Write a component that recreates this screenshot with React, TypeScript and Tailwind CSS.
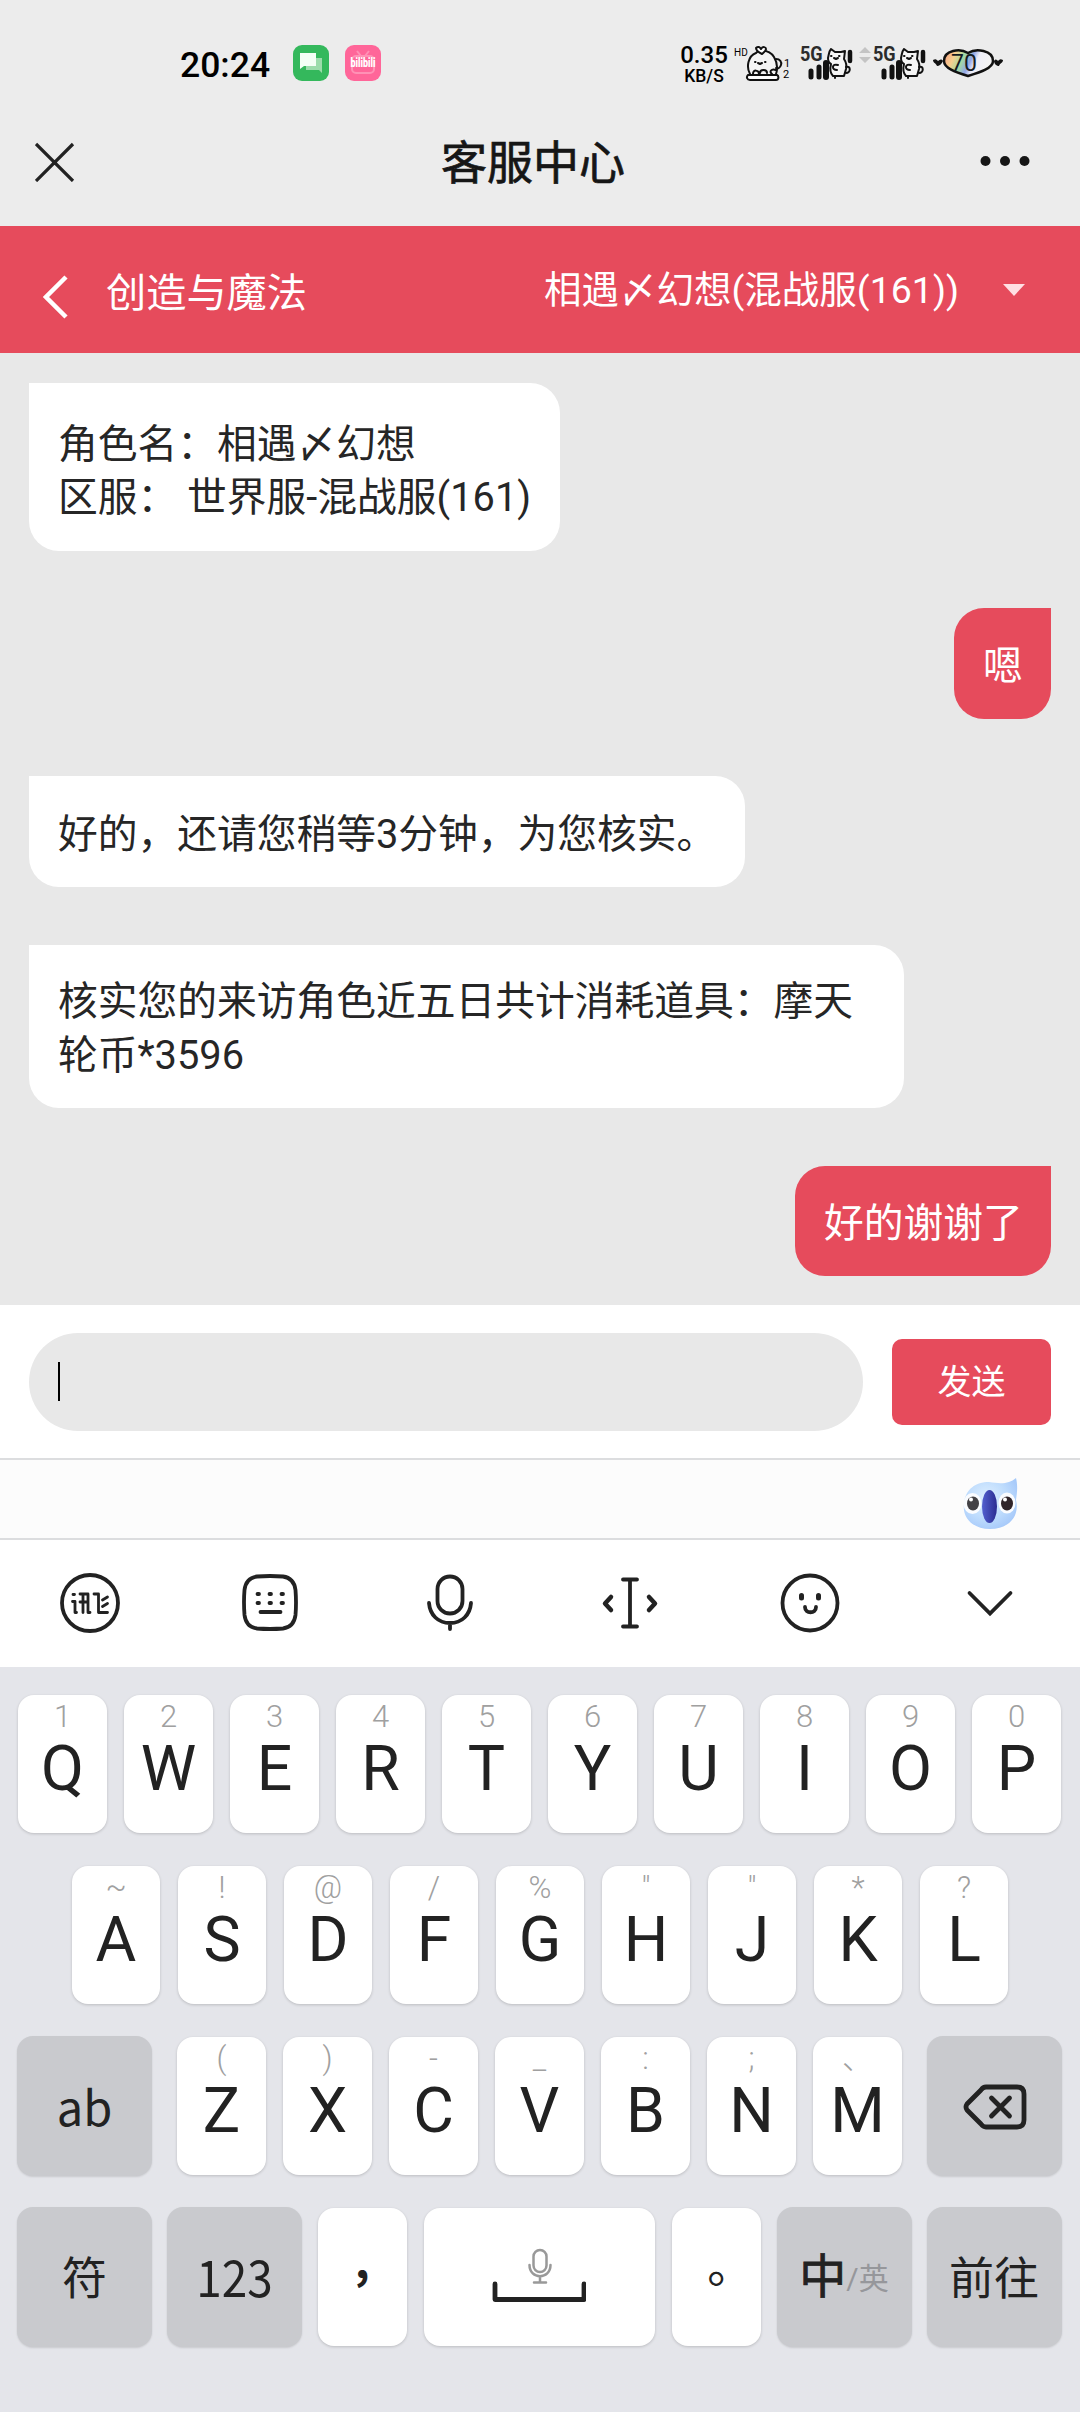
import type { ReactNode } from 'react';

interface Message {
  id: number;
  from: 'agent' | 'user';
  lines: string[];
  className: string;
}

interface LetterKey {
  label: string;
  hint: string;
}

const MESSAGES: Message[] = [
  { id: 1, from: 'agent', lines: ['角色名：相遇〆幻想', '区服：\u00a0世界服-混战服(161)'], className: 'w-[531px] h-[168px] mb-[57px] pt-[8px]' },
  { id: 2, from: 'user', lines: ['嗯'], className: 'w-[97px] h-[111px] mb-[57px] pt-[7px]' },
  { id: 3, from: 'agent', lines: ['好的，还请您稍等3分钟，为您核实。'], className: 'w-[716px] h-[111px] mb-[58px] pt-[6px]' },
  { id: 4, from: 'agent', lines: ['核实您的来访角色近五日共计消耗道具：摩天', '轮币*3596'], className: 'w-[875px] h-[163px] mb-[58px] pt-[4px]' },
  { id: 5, from: 'user', lines: ['好的谢谢了'], className: 'w-[256px] h-[110px] pt-[5px]' },
];

const toKeys = (letters: string, hints: string): LetterKey[] =>
  letters.split('').map((label, i) => ({ label, hint: hints[i] }));

const ROW_1 = toKeys('QWERTYUIOP', '1234567890');
const ROW_2 = toKeys('ASDFGHJKL', '~!@/%""*?');
const ROW_3 = toKeys('ZXCVBNM', '()-_:;、');

function CatIcon() {
  return (
    <svg className="h-[38px] w-[38px]" viewBox="0 0 38 38" fill="none" stroke="#111" strokeWidth="2" strokeLinecap="round" strokeLinejoin="round">
      <path d="M5 29C1 22 3 11 11 8c1-1 2-2 3-2 6-1 12 1 15 6 3 5 4 11 2 17" fill="#f4f4f4" />
      <path d="M11 3c2-2 4-1 5 1 2-3 5-2 5 0 0 2-3 4-4 5-2-1-6-3-6-6Z" fill="#fff" />
      <path d="M31 14c4 0 6 3 5 6s-3 4-5 3" />
      <path d="M3 30c-2 2-1 5 2 5h26c3 0 3-4 1-5Z" fill="#fff" />
      <path d="M8 29c0-5 6-4 6 0M15 28c0-4 7-4 7 0M31 25c-5-2-7 2-4 4M10 17h.5M20 17h.5M13 18l2 1 2-1" />
    </svg>
  );
}

function SignalIcon() {
  return (
    <span className="relative block h-[36px] w-[55px]">
      <span className="absolute left-0 top-0 origin-left scale-x-[.86] font-[Roboto] text-[21px] font-bold leading-[18px] text-[#2b2b2b]">5G</span>
      <svg className="h-[36px] w-[55px]" viewBox="0 0 55 36" fill="none" stroke="#111" strokeWidth="2" strokeLinecap="round" strokeLinejoin="round">
        <path d="M11 26v6M19 22v10" strokeWidth="5" />
        <path d="M26 18v14" strokeWidth="6" />
        <path d="M50 7v9" strokeWidth="4.5" />
        <path d="M28 13c1-4 1-7 3-9l4 3h6l4-1-1 8c2 3 3 6 2 10l-2 7H33c-3-3-3-8-2-12-2-1-3-3-3-6Z" fill="#f5f5f5" />
        <path d="M31 11h.5M39 11h.5M34 13l2 1 2-1M38 20c-6-2-7 5-1 5M35 33v-2M46 22c5-2 5 6 0 6" />
      </svg>
    </span>
  );
}

function BatteryIcon() {
  return (
    <span className="relative flex h-[30px] w-[72px] items-center justify-center">
      <svg className="absolute inset-0" width="72" height="30" viewBox="0 0 72 30">
        <defs>
          <linearGradient id="battery" x1="0" x2="1" y1="0" y2=".25">
            <stop offset="0" stopColor="#f59a86" />
            <stop offset=".25" stopColor="#f7cf8e" />
            <stop offset=".43" stopColor="#a5dba0" />
            <stop offset=".6" stopColor="#91a6e8" />
            <stop offset=".72" stopColor="#eeeef8" />
            <stop offset="1" stopColor="#f4f4f4" />
          </linearGradient>
        </defs>
        <path d="M36 5C28 0 12 2 12 13c0 7 11 11 24 15 13-4 25-8 25-15C61 2 44 0 36 5Z" fill="url(#battery)" stroke="#111" strokeWidth="2.5" />
        <path d="M1 12c3-2 4 0 5 1 2-2 4-2 5 0-1 3-4 5-6 5-1-3-4-3-4-6ZM71 12c-3-2-4 0-5 1-2-2-3-2-4 0 0 3 3 5 5 5 1-3 4-3 4-6Z" fill="#111" />
      </svg>
      <span className="relative pr-2 font-[Roboto] text-[23px] leading-none text-[#151b22]">70</span>
    </span>
  );
}

function StatusBar() {
  return (
    <div className="flex h-[126px] items-start pt-[45px] font-[Roboto] text-black">
      <span className="ml-[180px] mt-[2px] w-[113px] text-[35.5px] font-medium leading-[36px]">20:24</span>
      <svg className="mr-4 h-9 w-9 shrink-0" viewBox="0 0 36 36">
        <rect width="36" height="36" rx="9" fill="#34b85c" />
        <path d="M13 13h16v15l-3-3H13Z" fill="#9bdcab" />
        <path d="M7 8h16v13H11l-4 3Z" fill="#f3fff5" />
      </svg>
      <span className="relative flex h-9 w-9 shrink-0 items-center justify-center rounded-[9px] bg-[#ff6699]">
        <svg className="absolute inset-0" viewBox="0 0 36 36" fill="none" stroke="#ff91b5" strokeWidth="2">
          <rect x="7" y="11" width="22" height="17" rx="4" />
          <path d="M12 6l4 5M24 6l-4 5" />
        </svg>
        <span className="relative scale-y-150 text-[9px] font-black leading-none text-white">bilibili</span>
      </span>
      <span className="ml-[298px] flex w-[50px] shrink-0 flex-col items-center font-medium">
        <span className="text-[24px] leading-[21px]">0.35</span>
        <span className="text-[17.5px] leading-[20px]">KB/S</span>
      </span>
      <span className="ml-[5px] mt-[4px] w-[14px] shrink-0 text-[10px] leading-[8px]">HD</span>
      <span className="-ml-[3px] shrink-0">
        <CatIcon />
      </span>
      <span className="mt-[13px] flex w-[17px] shrink-0 flex-col text-[11px] leading-[11px]">
        <span className="pl-px">1</span>
        <span>2</span>
      </span>
      <SignalIcon />
      <svg className="ml-[4px] mt-[2px] h-4 w-3 shrink-0" viewBox="0 0 12 16" fill="#c4c4c4">
        <path d="M6 0l6 6H0ZM6 16l6-6H0Z" />
      </svg>
      <span className="ml-[2px]">
        <SignalIcon />
      </span>
      <span className="ml-[4px] mt-[3px]">
        <BatteryIcon />
      </span>
    </div>
  );
}

function TitleBar() {
  return (
    <div className="flex h-[100px] items-start justify-between pl-[35px] pr-[49px] pt-[12px]">
      <svg className="mt-[4px] h-10 w-[52px]" viewBox="0 0 52 40" stroke="#222" strokeWidth="3.2">
        <path d="M1 2l37 37M38 2L1 39" />
      </svg>
      <h1 className="text-[46px] leading-[50px] text-[#161616] [-webkit-text-stroke:0.7px]">客服中心</h1>
      <svg className="mt-[17px] h-3 w-[52px]" viewBox="0 0 52 12" fill="#161616">
        <circle cx="6.5" cy="6" r="5" />
        <circle cx="26" cy="6" r="5" />
        <circle cx="45.5" cy="6" r="5" />
      </svg>
    </div>
  );
}

function GameHeader() {
  return (
    <div className="flex h-[127px] items-center bg-[#e64b5c] text-white">
      <svg className="ml-[43px] mt-[14px] h-[44px] w-[26px]" viewBox="0 0 26 44" fill="none" stroke="white" strokeWidth="4.5">
        <path d="M23 2L3 22l20 20" />
      </svg>
      <span className="ml-[37px] mt-[9px] text-[40.2px] leading-[50px]">创造与魔法</span>
      <span className="ml-auto whitespace-nowrap text-[37.5px] leading-[50px]">相遇〆幻想(混战服(161))</span>
      <svg className="ml-[44px] mr-[55px] h-[12px] w-[22px]" viewBox="0 0 22 12" fill="#ffdfe3">
        <path d="M0 0h22L11 12Z" />
      </svg>
    </div>
  );
}

function Bubble({ message }: { message: Message }) {
  const isUser = message.from === 'user';

  return (
    <div
      className={`flex flex-col justify-center whitespace-nowrap px-[29px] text-[39.75px] leading-[53.5px] ${message.className} ${
        isUser ? 'self-end rounded-[30px] rounded-tr-none bg-[#e64b5c] text-white' : 'rounded-[30px] rounded-tl-none bg-white text-[#262626]'
      }`}
    >
      {message.lines.map((line) => (
        <p key={line}>{line}</p>
      ))}
    </div>
  );
}

function Composer() {
  return (
    <div className="flex h-[153px] items-center justify-between bg-white px-[29px]">
      <div className="flex h-[98px] w-[834px] items-center rounded-full bg-[#e8e8e8] pl-[29px]">
        <span className="h-[39px] w-[2px] bg-black" />
      </div>
      <button className="h-[86px] w-[159px] rounded-[10px] bg-[#e64b5c] pt-[2px] text-[34px] text-white">发送</button>
    </div>
  );
}

function MascotIcon() {
  return (
    <svg className="mt-[11px] h-[56px] w-[60px]" viewBox="0 0 60 56">
      <defs>
        <radialGradient id="face" cx=".42" cy=".4" r=".65">
          <stop offset="0" stopColor="#e0f0ff" />
          <stop offset=".6" stopColor="#bedcfd" />
          <stop offset="1" stopColor="#a6c9fa" />
        </radialGradient>
        <linearGradient id="nose" x1="0" x2="1">
          <stop offset="0" stopColor="#5360cf" />
          <stop offset="1" stopColor="#2b2c91" />
        </linearGradient>
      </defs>
      <path d="M56 1c2 8 1 15 0 22 4 17-8 29-26 29C13 52 2 41 4 27 5 12 16 5 29 5c12 2 20 2 27-4Z" fill="url(#face)" />
      <ellipse cx="12.5" cy="26.5" rx="9" ry="10.5" fill="#fafcff" />
      <ellipse cx="47" cy="26" rx="8.5" ry="10.5" fill="#fafcff" />
      <ellipse cx="13" cy="26.5" rx="6" ry="7" fill="#434246" />
      <ellipse cx="47" cy="26.5" rx="6" ry="7" fill="#30252a" />
      <circle cx="11" cy="22.5" r="2" fill="#fff" />
      <circle cx="45" cy="22.5" r="2" fill="#fff" />
      <ellipse cx="29.5" cy="29.5" rx="7.5" ry="16.5" fill="url(#nose)" />
    </svg>
  );
}

function ToolIcon({ children }: { children: ReactNode }) {
  return (
    <svg className="h-16 w-16" viewBox="0 0 64 64" fill="none" stroke="#222" strokeWidth="3.8" strokeLinecap="round" strokeLinejoin="round">
      {children}
    </svg>
  );
}

function Toolbar() {
  return (
    <div className="grid h-[127px] grid-cols-6 place-items-center bg-white pb-[2px]">
      <ToolIcon>
        <circle cx="32" cy="32" r="28" />
        <g strokeWidth="2.8">
          <path d="M15 23.5h1.5M14.5 30.5H17v11h1.5" />
          <path d="M22 23h8v18.500h2M25 23v18.5M22 31h6M36 23h4.500v18.500h9" />
          <path d="M44.5 29l5-3M44.5 35.5l5-3" />
        </g>
      </ToolIcon>
      <ToolIcon>
        <path d="M19 5.500Q32 4.500 45 5.500 56 7 57.500 19q1 13 0 25-1.500 12-12.500 13.500-13 1-26 0Q8 56 6.500 44q-1-13 0-25Q8 7 19 5.500Z" />
        <path d="M19.500 23H21M31.500 23H33M43.500 23H45M19.500 32H21M31.500 32H33M43.500 32H45M22.500 41h20" />
      </ToolIcon>
      <ToolIcon>
        <rect x="19.5" y="5.5" width="25" height="37" rx="12.5" />
        <path d="M11 32c1 12 9 20 21 20s20-8 21-20M32 52v6" />
      </ToolIcon>
      <ToolIcon>
        <path d="M25 8.500h14M25 55.500h14M32 8.500v47" />
        <path d="M13 26l-6 6.500 6 6.500M51 26l6 6.500-6 6.500" strokeWidth="4.5" />
      </ToolIcon>
      <ToolIcon>
        <circle cx="32" cy="32" r="27.5" />
        <path d="M23.500 24.500v2.500M40.500 24.500v2.500" strokeWidth="5" />
        <path d="M27 36c0 7 11 7 11 0" />
      </ToolIcon>
      <ToolIcon>
        <path d="M11.500 22L32 42.500 52.500 22" strokeLinejoin="miter" />
      </ToolIcon>
    </div>
  );
}

function LetterKeyCap({ label, hint }: LetterKey) {
  return (
    <div className="flex h-[138px] w-[88.5px] shrink-0 flex-col items-center rounded-[16px] bg-white font-[Roboto,'Noto_Sans_CJK_SC'] shadow-[0_1px_3px_rgba(0,0,0,0.18)]">
      <span className="mt-[5px] h-[33px] text-[31px] font-light leading-[34px] text-[#a0a0a0]">{hint}</span>
      <span className="text-[62.5px] leading-[72px] text-[#222]">{label}</span>
    </div>
  );
}

function FunctionKey({ children }: { children: ReactNode }) {
  return (
    <div className="flex h-[140px] w-[135px] shrink-0 items-center justify-center rounded-[16px] bg-[#c9cace] text-[#222] shadow-[0_1px_2px_rgba(0,0,0,0.12)]">
      {children}
    </div>
  );
}

function PunctuationKey({ children }: { children: ReactNode }) {
  return (
    <div className="flex h-[138px] w-[88.5px] shrink-0 items-center justify-center rounded-[16px] bg-white text-[#222] shadow-[0_1px_3px_rgba(0,0,0,0.18)]">
      {children}
    </div>
  );
}

function Keyboard() {
  return (
    <div className="h-[745px] bg-[#e4e5ea] pt-[28px]">
      <div className="flex justify-center gap-[17.5px] pr-px">
        {ROW_1.map((key) => (
          <LetterKeyCap key={key.label} {...key} />
        ))}
      </div>
      <div className="mt-[33px] flex justify-center gap-[17.5px]">
        {ROW_2.map((key) => (
          <LetterKeyCap key={key.label} {...key} />
        ))}
      </div>
      <div className="mt-[32px] flex items-center justify-between pl-[17px] pr-[18px]">
        <FunctionKey>
          <span className="pb-[2px] font-['Noto_Sans_CJK_SC'] text-[47px] leading-none">ab</span>
        </FunctionKey>
        <div className="flex gap-[17.5px]">
          {ROW_3.map((key) => (
            <LetterKeyCap key={key.label} {...key} />
          ))}
        </div>
        <FunctionKey>
          <svg className="mt-[2px] h-[46px] w-[64px]" viewBox="0 0 64 46" fill="none" stroke="#222" strokeWidth="4.8" strokeLinecap="round" strokeLinejoin="round">
            <path d="M23 3h31q7 0 7 7v26q0 7-7 7H23q-3 0-5-3L4 26q-2-3 0-6L18 6q2-3 5-3Z" />
            <path d="M28.500 14l18 18M46.500 14l-18 18" />
          </svg>
        </FunctionKey>
      </div>
      <div className="mt-[31px] flex items-center pl-[17px] text-[45px]">
        <FunctionKey>
          <span className="pt-[5px]">符</span>
        </FunctionKey>
        <span className="w-[15px]" />
        <FunctionKey>
          <span className="scale-x-[.9] pb-[4px] font-['Noto_Sans_CJK_SC'] text-[51px] leading-none">123</span>
        </FunctionKey>
        <span className="w-[16px]" />
        <PunctuationKey>
          <span className="pb-[38px] font-['Noto_Sans_CJK_SC'] text-[46px] font-bold leading-none">,</span>
        </PunctuationKey>
        <div className="mx-[17.5px] flex h-[138px] w-[230.5px] shrink-0 flex-col items-center rounded-[16px] bg-white pt-[39px] shadow-[0_1px_3px_rgba(0,0,0,0.18)]">
          <svg className="h-[60px] w-[94px]" viewBox="0 0 94 60" fill="none" strokeLinecap="round" strokeLinejoin="round">
            <g stroke="#999" strokeWidth="2.5">
              <rect x="41.5" y="3" width="13" height="22" rx="6.5" />
              <path d="M37.500 18c0 15 21 15 21 0M48 30v5M42 35.500h12" />
            </g>
            <path d="M3 37v15.500h89V37" stroke="#222" strokeWidth="4.8" />
          </svg>
        </div>
        <PunctuationKey>
          <span className="pb-[30px] pl-[28px] font-['Noto_Sans_CJK_SC'] text-[46px] leading-none">。</span>
        </PunctuationKey>
        <span className="w-[16px]" />
        <FunctionKey>
          <span className="pt-px text-[47px] [-webkit-text-stroke:0.8px]">中</span>
          <span className="pt-[3px] text-[30px] text-[#96979b]">/英</span>
        </FunctionKey>
        <span className="w-[15px]" />
        <FunctionKey>
          <span className="pt-[5px]">前往</span>
        </FunctionKey>
      </div>
    </div>
  );
}

export default function App() {
  return (
    <div className="flex h-[2412px] w-[1080px] flex-col overflow-hidden bg-[#ececec] font-[Roboto,'Noto_Sans_CJK_SC',sans-serif]">
      <StatusBar />
      <TitleBar />
      <GameHeader />
      <main className="flex h-[952px] flex-col items-start bg-[#e8e8e8] px-[29px] pt-[30px]">
        {MESSAGES.map((message) => (
          <Bubble key={message.id} message={message} />
        ))}
      </main>
      <Composer />
      <div className="flex h-[82px] items-center justify-end border-y-2 border-[#dcdddf] bg-[#fcfcfc] pr-[60px]">
        <MascotIcon />
      </div>
      <Toolbar />
      <Keyboard />
    </div>
  );
}
